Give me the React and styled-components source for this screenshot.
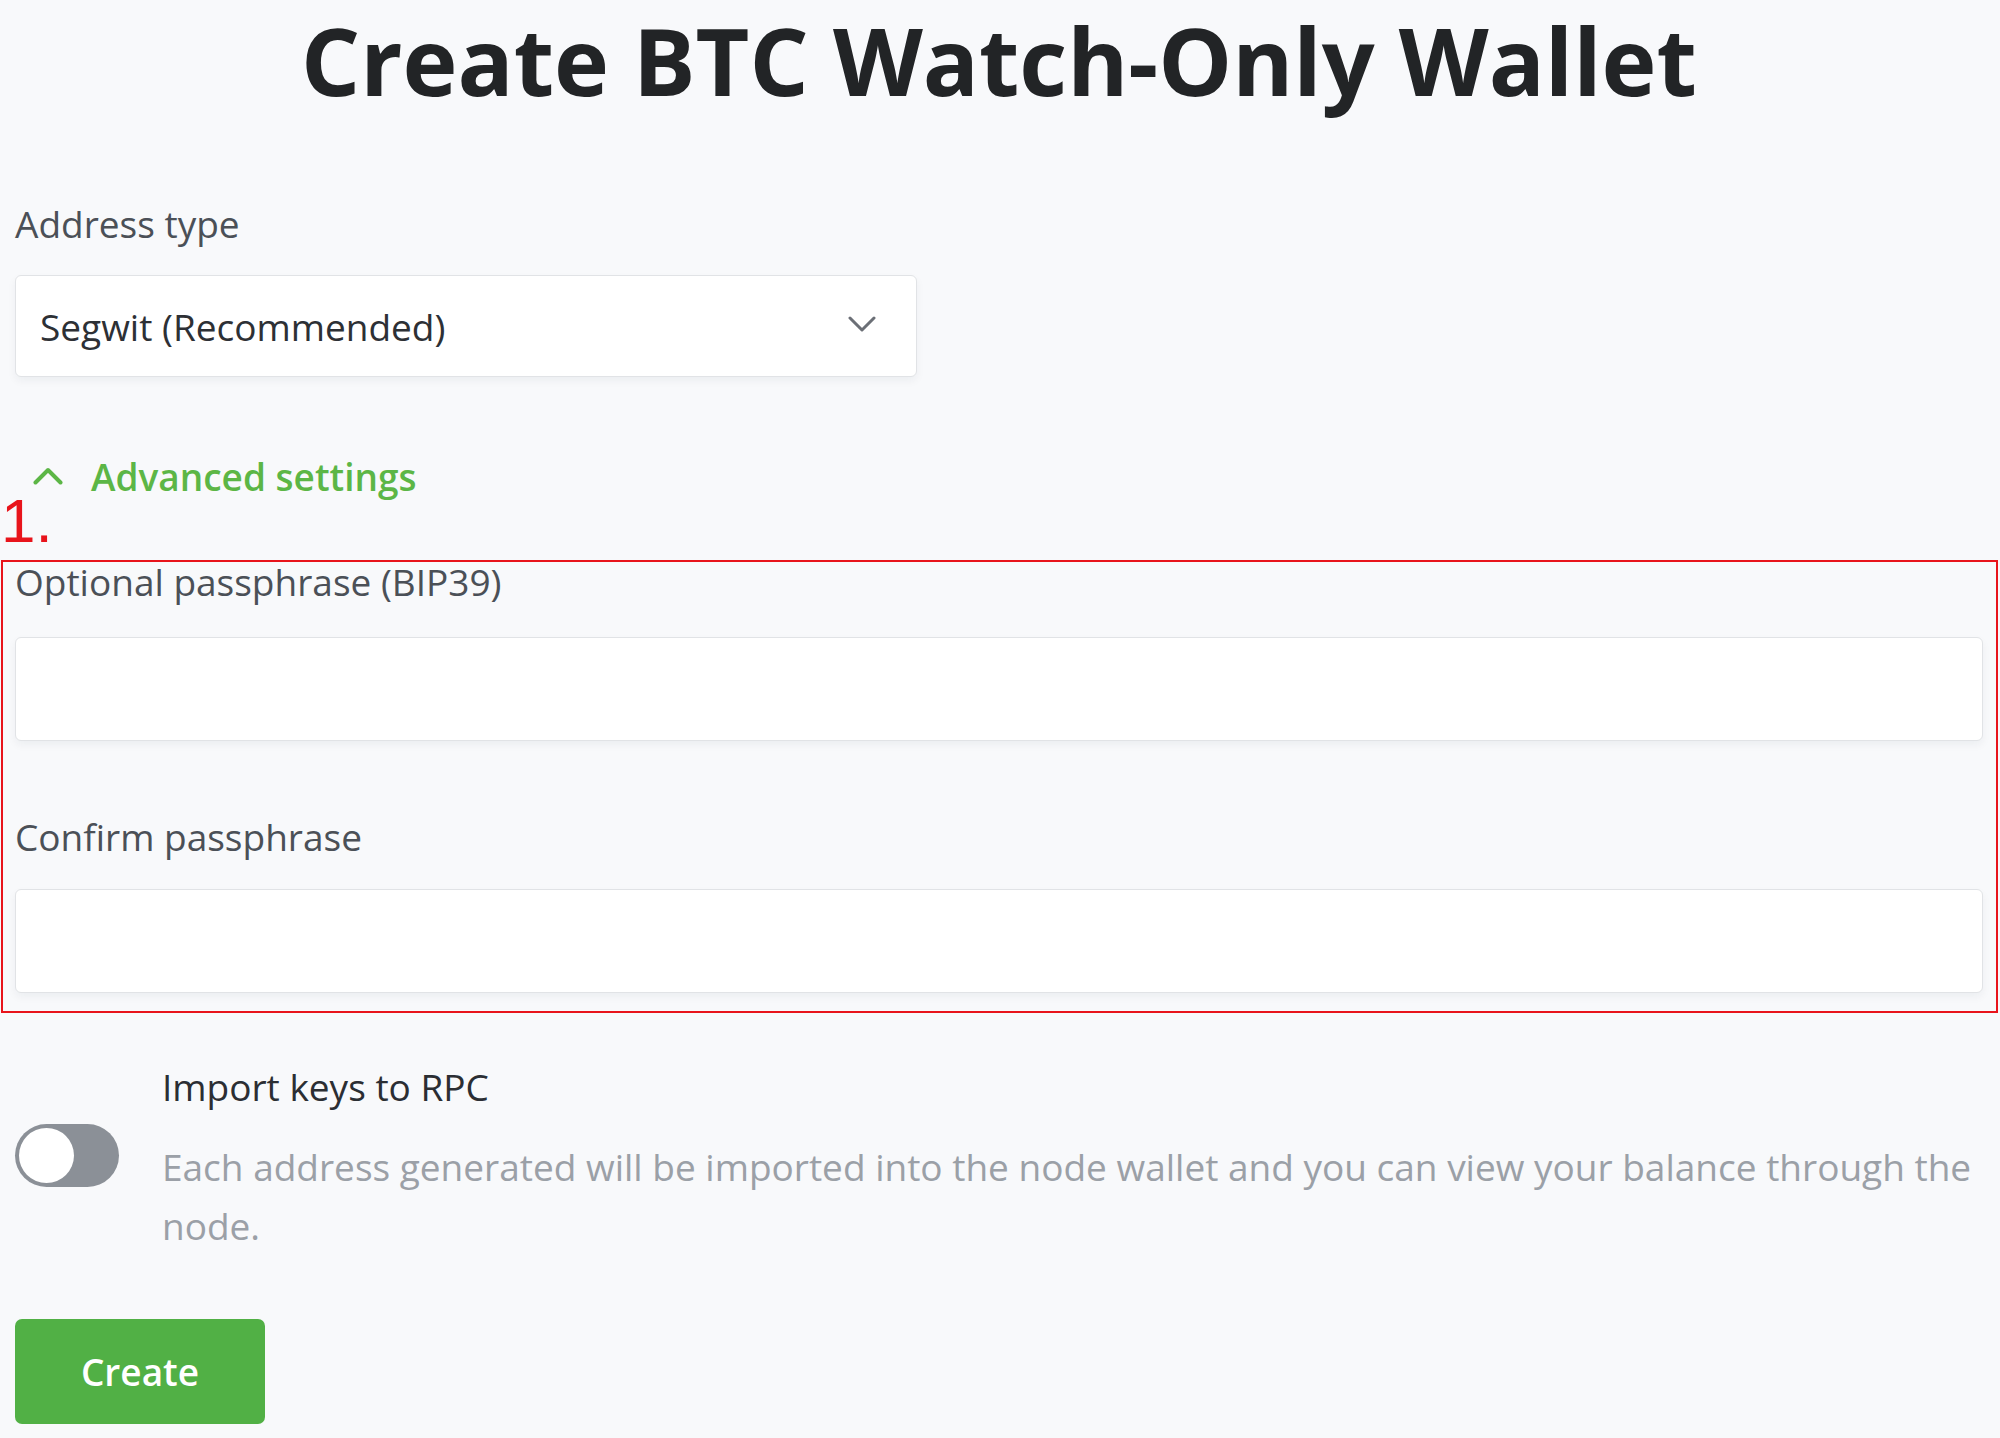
import React from 'react';
import styled, { createGlobalStyle } from 'styled-components';

const GlobalStyle = createGlobalStyle`
  html, body {
    margin: 0;
    padding: 0;
    background: #f8f9fb;
  }
  body {
    font-family: "Open Sans", "Noto Sans", sans-serif;
  }
  * { box-sizing: border-box; }
`;

function ChevronDown() {
  return (
    <svg width="28" height="16" viewBox="0 0 28 16" fill="none">
      <path d="M2 2l12 12L26 2" stroke="#6b6f76" strokeWidth="3" strokeLinecap="round" strokeLinejoin="round" />
    </svg>
  );
}

function ChevronUp() {
  return (
    <svg width="30" height="18" viewBox="0 0 30 18" fill="none">
      <path d="M2.5 15.5L15 3l12.5 12.5" stroke="#5cb646" strokeWidth="4" strokeLinecap="round" strokeLinejoin="round" />
    </svg>
  );
}

function App() {
  return (
    <Page>
      <GlobalStyle />
      <Title>Create BTC Watch-Only Wallet</Title>

      <Label>Address type</Label>
      <SelectBox>
        <span>Segwit (Recommended)</span>
        <ChevronDown />
      </SelectBox>

      <AdvancedToggle>
        <ChevronUp />
        <span>Advanced settings</span>
      </AdvancedToggle>

      <Annotated>
        <Marker>1.</Marker>
        <Label gap={34}>Optional passphrase (BIP39)</Label>
        <TextInput type="password" />
        <Label top={76} gap={32}>Confirm passphrase</Label>
        <TextInput type="password" />
      </Annotated>

      <SwitchRow>
        <Switch />
        <div>
          <SwitchTitle>Import keys to RPC</SwitchTitle>
          <SwitchHint>
            Each address generated will be imported into the node wallet and you can view your balance through the node.
          </SwitchHint>
        </div>
      </SwitchRow>

      <CreateButton>Create</CreateButton>
    </Page>
  );
}

const Page = styled.div`
  width: 2000px;
  min-height: 1438px;
  padding: 5px 17px 0 15px;
  background: #f8f9fb;
`;

const Title = styled.h1`
  margin: 0 0 87px;
  text-align: center;
  font-size: 93px;
  line-height: 1.2;
  font-weight: 700;
  color: #222426;
`;

const Label = styled.div`
  margin: ${(props) => props.top || 0}px 0 ${(props) => props.gap || 31}px;
  font-size: 37px;
  line-height: 1.1;
  color: #4b5057;
`;

const SelectBox = styled.div`
  width: 902px;
  height: 102px;
  display: flex;
  align-items: center;
  justify-content: space-between;
  padding: 0 40px 0 24px;
  background: #fff;
  border: 1px solid #e1e3e6;
  border-radius: 6px;
  box-shadow: 0 4px 8px rgba(20, 30, 50, 0.05);
  font-size: 37px;
  color: #2d3035;

  svg {
    margin-top: -4px;
  }
`;

const AdvancedToggle = styled.div`
  display: flex;
  align-items: center;
  gap: 28px;
  margin: 80px 0 0 18px;
  font-size: 37px;
  line-height: 1.1;
  font-weight: 600;
  color: #5cb646;
  cursor: pointer;

  svg {
    margin-top: -4px;
  }
`;

const Annotated = styled.section`
  position: relative;
  margin: 62px -15px 0 -14px;
  padding: 0 13px 18px 12px;
  border: 2px solid #e8141b;
`;

const Marker = styled.div`
  position: absolute;
  left: -2px;
  top: -78px;
  font-family: "Liberation Sans", Arial, sans-serif;
  font-size: 62px;
  line-height: 1.2;
  color: #e8141b;
`;

const TextInput = styled.input`
  display: block;
  width: 100%;
  height: 104px;
  padding: 0 24px;
  background: #fff;
  border: 1px solid #e1e3e6;
  border-radius: 6px;
  box-shadow: 0 4px 8px rgba(20, 30, 50, 0.05);
  font-family: inherit;
  font-size: 37px;
  outline: none;
`;

const SwitchRow = styled.div`
  display: grid;
  grid-template-columns: 104px 1fr;
  column-gap: 43px;
  align-items: start;
  margin-top: 54px;
`;

const Switch = styled.div`
  position: relative;
  width: 104px;
  height: 63px;
  margin-top: 57px;
  border-radius: 32px;
  background: #8b9097;

  &::after {
    content: '';
    position: absolute;
    left: 4px;
    top: 4px;
    width: 55px;
    height: 55px;
    border-radius: 50%;
    background: #fff;
  }
`;

const SwitchTitle = styled.div`
  font-size: 37px;
  line-height: 1.1;
  color: #2b2e33;
`;

const SwitchHint = styled.p`
  margin: 29px 0 0;
  font-size: 37px;
  line-height: 59px;
  color: #9ba0a7;
`;

const CreateButton = styled.button`
  display: block;
  width: 250px;
  height: 105px;
  margin-top: 64px;
  border: none;
  border-radius: 7px;
  background: #51b045;
  color: #fff;
  font-family: inherit;
  font-size: 37px;
  font-weight: 600;
  cursor: pointer;
`;

export default App;
